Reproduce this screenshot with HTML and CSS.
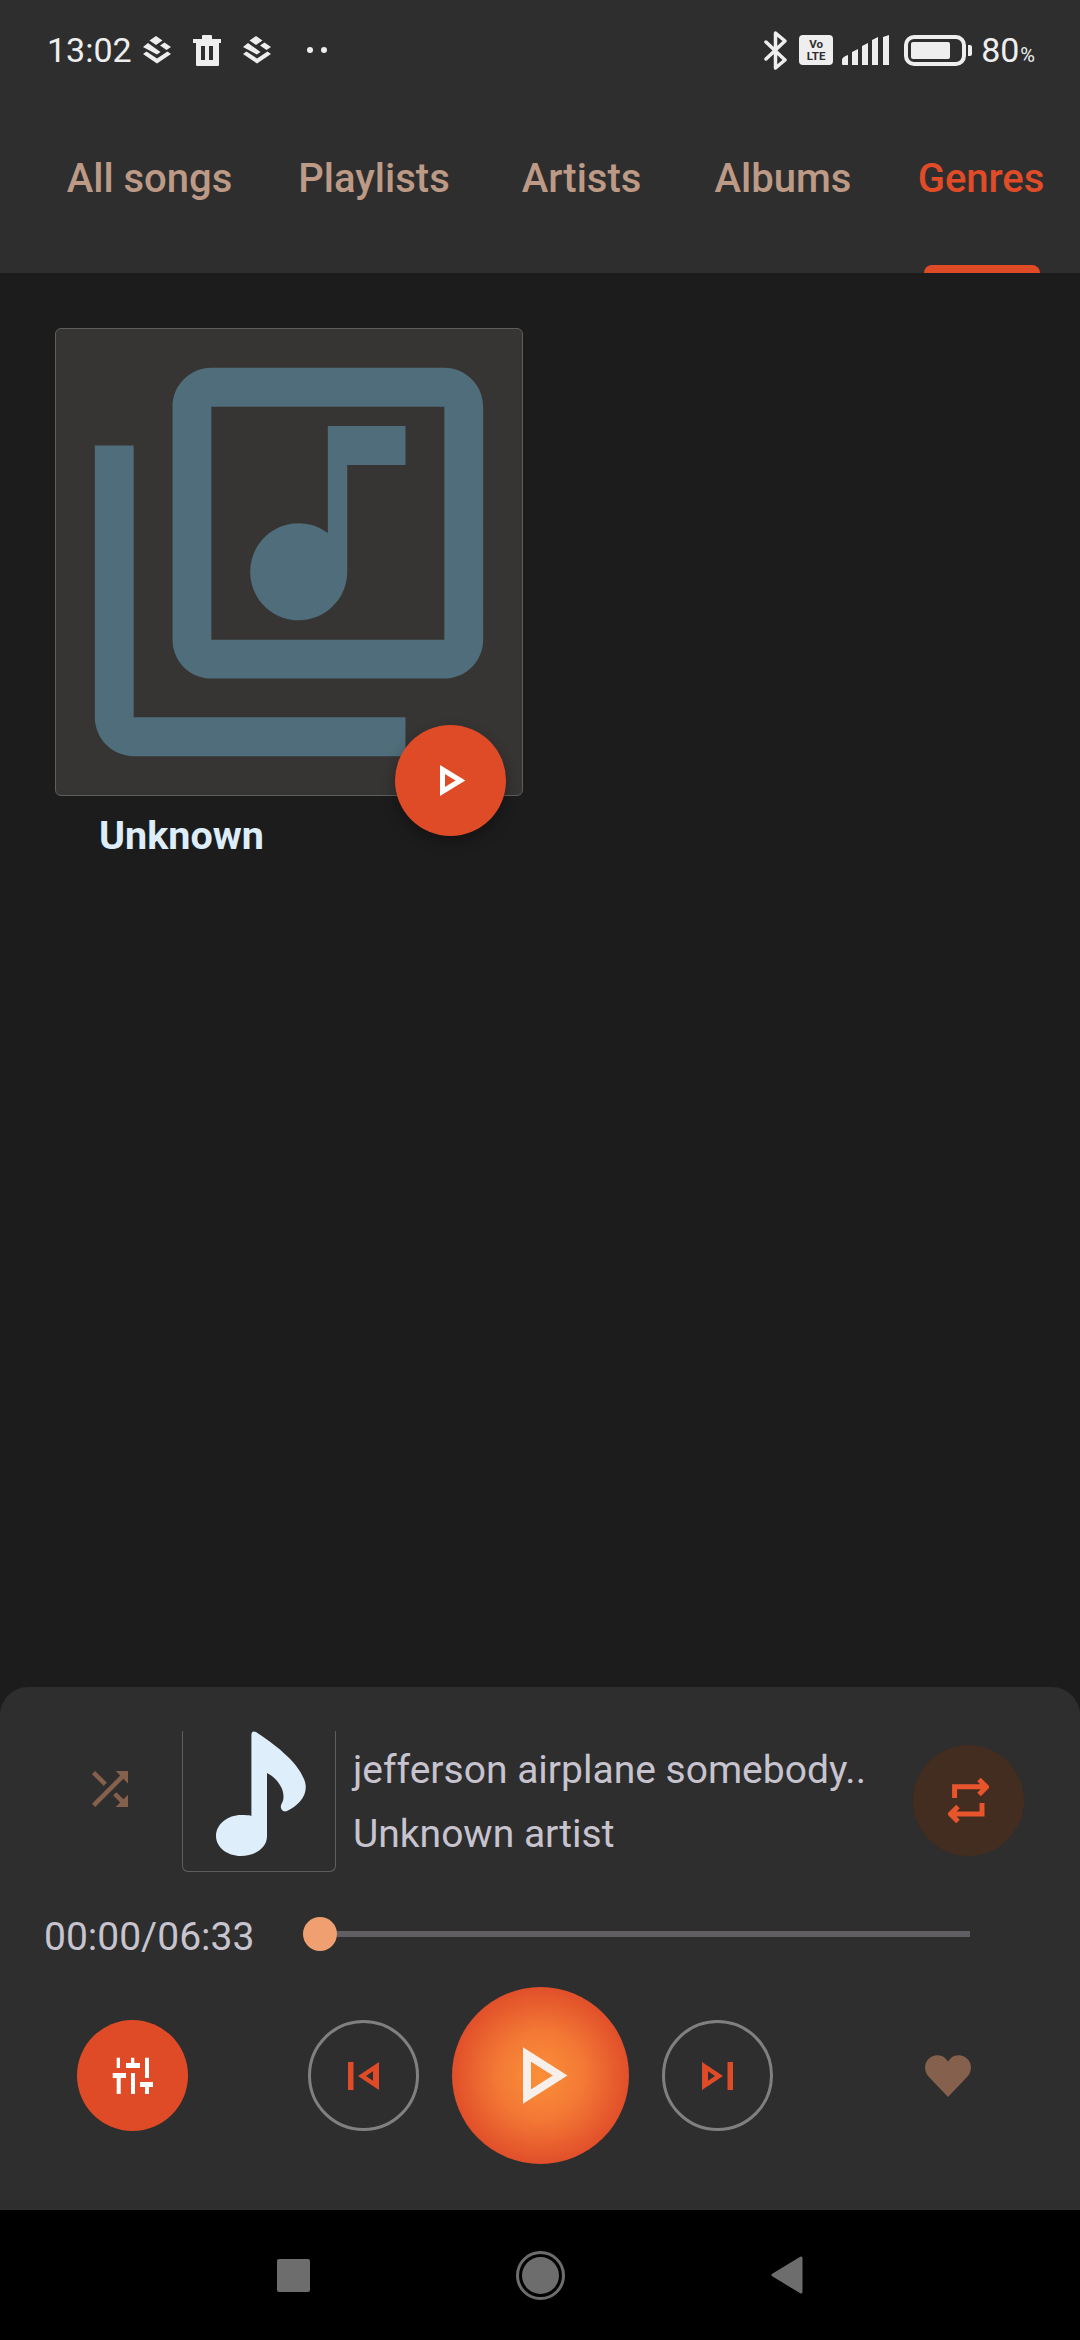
FILE: index.html
```html
<!DOCTYPE html>
<html lang="en">
<head>
    <meta charset="UTF-8">
    <title>Genres</title>
    <link rel="stylesheet" href="styles.css">
</head>
<body>
<div id="container">
    <div class="header">
        <div class="status">
            <div class="status-left">
                <span class="time">13:02</span>
                <svg class="st-layers" width="28" height="28" viewBox="0 0 28 28"><path fill="#eee" d="M13 0l6.500 4.500-6.500 4.500-6.500-4.500zM21.500 6.500l6.500 4.500-4.500 3-6.500-4.500zM5 7l12.500 9-3.500 2.500L0 11zM0 18l3.500-2.500 10.500 7 10.500-7 3.500 2.500-14 9.500z"/></svg>
                <svg class="st-trash" width="28" height="31" viewBox="0 0 28 31"><path fill="#eee" d="M0 4h9V1q0-1 1-1h8q1 0 1 1v3h9v4H26v22q0 1-1 1H4q-1 0-1-1V8H0zM8 11v14h4V11zM16 11v14h4V11z"/></svg>
                <svg class="st-layers2" width="28" height="28" viewBox="0 0 28 28"><path fill="#eee" d="M13 0l6.500 4.500-6.500 4.500-6.500-4.500zM21.500 6.500l6.500 4.500-4.500 3-6.500-4.500zM5 7l12.500 9-3.500 2.500L0 11zM0 18l3.500-2.500 10.500 7 10.500-7 3.500 2.500-14 9.500z"/></svg>
                <span class="dots"><i></i><i></i></span>
            </div>
            <div class="status-right">
                <svg class="st-bt" width="24" height="39" viewBox="0 0 24 39"><path fill="none" stroke="#eee" stroke-width="3.500" stroke-linecap="round" stroke-linejoin="round" d="M2 11l19 18-9.500 8V2L21 10 2 28"/></svg>
                <span class="volte"><span>Vo</span><span>LTE</span></span>
                <svg class="st-signal" width="47" height="30" viewBox="0 0 47 30"><path fill="#eee" d="M0 25q0-3 6-5v10H1q-1 0-1-1zM10 17l6-3v16h-6zM20 11l6-3v22h-6zM30 5l6-3v28h-6zM41 2l6-2v30h-6z"/></svg>
                <span class="battery"><i></i></span>
                <span class="battery-nub"></span>
                <span class="percent">80<small>%</small></span>
            </div>
        </div>
        <ul class="tabs">
            <li>All songs</li>
            <li>Playlists</li>
            <li>Artists</li>
            <li>Albums</li>
            <li class="selected">Genres</li>
        </ul>
    </div>

    <div class="content">
        <div class="genre">
            <div class="cover">
                <svg width="466" height="466" viewBox="0 0 24 24"><path fill="#4f6d7a" d="M20 2H8c-1.100 0-2 .9-2 2v12c0 1.100.9 2 2 2h12c1.100 0 2-.9 2-2V4c0-1.100-.9-2-2-2zm0 14H8V4h12v12zm-7.500-1c1.380 0 2.500-1.120 2.500-2.500V7h3V5h-4v5.510c-.42-.32-.93-.51-1.500-.51-1.380 0-2.500 1.120-2.500 2.500s1.120 2.500 2.500 2.500zM4 6H2v14c0 1.100.9 2 2 2h14v-2H4V6z"/></svg>
                <span class="fab">
                    <svg width="26" height="31" viewBox="0 0 26 31"><path fill="none" stroke="#fff" stroke-width="5" d="M2.500 4.500v22l18-11z"/></svg>
                </span>
            </div>
            <div class="genre-name">Unknown</div>
        </div>
    </div>

    <div class="player">
        <div class="now">
            <svg class="shuffle" width="54" height="54" viewBox="0 0 24 24"><path fill="#85604c" d="M10.590 9.170L5.410 4 4 5.410l5.170 5.170 1.420-1.410zM14.500 4l2.040 2.040L4 18.590 5.410 20 17.960 7.460 20 9.500V4h-5.500zm.33 9.410l-1.410 1.410 3.130 3.130L14.500 20H20v-5.500l-2.040 2.040-3.130-3.130z"/></svg>
            <div class="thumb">
                <svg width="152" height="140" viewBox="0 0 152 140"><path fill="#deeefa" d="M68.400 4Q68.400-1 73 1C90 12 114 30 121 48 127 62 117 74 104 80 99 82 96 76 99 72 104 62 96 48 84 42V105C84 117 72 125 58 125 44 125 33 116 33 105 33 93 45 84 58 84 68.400 84 68.400 85 68.400 85z"/></svg>
            </div>
            <div class="track">
                <div class="title">jefferson airplane somebody..</div>
                <div class="artist">Unknown artist</div>
            </div>
            <span class="repeat">
                <svg width="41" height="45" viewBox="0 0 41 45"><path fill="none" stroke="#e8552c" stroke-width="5" d="M6.600 20V8.700H38M31 1.500l7.500 7.500-7.500 7.500M34 25v11H3M10 28.500L2.500 36l7.500 7.500"/></svg>
            </span>
        </div>
        <div class="progress">
            <span class="elapsed">00:00/06:33</span>
            <div class="seek"><span class="seek-thumb"></span><span class="seek-bar"></span></div>
        </div>
        <div class="controls">
            <span class="eq">
                <svg width="41" height="37" viewBox="0 0 41 37"><path fill="#fff" d="M4.700 .7H8V11H4.700zM.7 16H14v5H8.700v16h-4V21h-4zM19 .7h3.300V6H28v5H14V6h5zM19 16h4v21h-4zM33 .7h4V21h-4zM28 25h13v5h-4v7h-4v-7h-5z"/></svg>
            </span>
            <span class="skip skip-prev">
                <svg width="31" height="28" viewBox="0 0 31 28"><path fill="#e04b27" d="M0 0h5.500v28H0zM10 14L31 0v28zM18 14l7 4.700V9.300z" fill-rule="evenodd"/></svg>
            </span>
            <span class="play">
                <svg width="45" height="57" viewBox="0 0 45 57"><path fill="none" stroke="#f7efe9" stroke-width="8" d="M4 7.500v42l33-21z"/></svg>
            </span>
            <span class="skip skip-next">
                <svg width="31" height="28" viewBox="0 0 31 28"><path fill="#e04b27" fill-rule="evenodd" d="M31 0h-5.500v28H31zM21 14L0 0v28zM13 14l-7 4.700V9.300z"/></svg>
            </span>
            <svg class="heart" width="46" height="42" viewBox="0 0 46 42"><path fill="#85604c" d="M23 42L3.500 21.500C-1 16.500-1 9 3 4.500 8-1 16-1 20.500 3.500L23 6.500 25.500 3.500C30-1 38-1 43 4.500 47 9 47 16.500 42.500 21.500z"/></svg>
        </div>
    </div>

    <div class="nav">
        <span class="nav-square"></span>
        <span class="nav-home"><i></i></span>
        <svg width="32" height="38" viewBox="0 0 32 38"><path fill="#6d6d6d" stroke="#6d6d6d" stroke-width="3" stroke-linejoin="round" d="M2 19L30 2v34z"/></svg>
    </div>
</div>
</body>
</html>
```

FILE: styles.css
```css
*{
    margin:0;
    padding:0;
    box-sizing:border-box;
}
ul{
    list-style:none;
}
body{
    background:#000;
    font-family:Roboto, "Noto Sans", sans-serif;
}
svg{
    display:block;
    flex:none;
}
#container{
    width:1080px;
    height:2340px;
    display:flex;
    flex-direction:column;
    background:#1c1c1c;
}

/* header */
.header{
    height:273px;
    flex:none;
    background:#2e2e2e;
    display:flex;
    flex-direction:column;
}
.status{
    height:100px;
    padding:0 45px 0 47px;
    display:flex;
    justify-content:space-between;
    align-items:center;
    color:#eee;
}
.status-left,
.status-right{
    display:flex;
    align-items:center;
}
.time{
    font-size:34px;
    width:96px;
}
.st-trash{
    margin-left:22px;
}
.st-layers2{
    margin-left:22px;
}
.dots{
    margin-left:36px;
    display:flex;
    gap:8px;
}
.dots i{
    width:6px;
    height:6px;
    border-radius:50%;
    background:#eee;
}
.st-bt{
    margin-right:11px;
}
.volte{
    width:34px;
    height:30px;
    background:#eee;
    border-radius:4px;
    color:#2e2e2e;
    font-size:11.5px;
    line-height:12px;
    font-weight:700;
    display:flex;
    flex-direction:column;
    align-items:center;
    justify-content:center;
}
.st-signal{
    margin-left:9px;
}
.battery{
    margin-left:15px;
    width:62px;
    height:31px;
    border:4px solid #eee;
    border-radius:10px;
    padding:3px;
    display:flex;
}
.battery i{
    width:39px;
    background:#eee;
    border-radius:2px;
}
.battery-nub{
    margin-left:2px;
    width:4px;
    height:11px;
    background:#eee;
    border-radius:0 2px 2px 0;
}
.percent{
    margin-left:9px;
    font-size:34px;
}
.percent small{
    font-size:20px;
    margin-left:1px;
}
.tabs{
    flex:1;
    padding-left:36px;
    display:grid;
    grid-template-columns:227px 222px 193px 210px 186px;
}
.tabs li{
    position:relative;
    text-align:center;
    font-size:40px;
    font-weight:500;
    line-height:66px;
    padding-top:46px;
    color:#bd9a86;
}
.tabs li.selected{
    color:#e04c28;
}
.tabs li.selected::after{
    content:"";
    position:absolute;
    left:36px;
    bottom:0;
    width:116px;
    height:8px;
    background:#e04b27;
    border-radius:8px 8px 0 0;
}

/* genre grid */
.content{
    flex:1;
    padding:55px 0 0 55px;
}
.genre{
    width:468px;
}
.cover{
    position:relative;
    width:468px;
    height:468px;
    background:#373533;
    border:1px solid #5e5e5c;
    border-radius:6px;
}
.fab{
    position:absolute;
    left:339px;
    top:396px;
    width:111px;
    height:111px;
    border-radius:50%;
    background:#e04b27;
    box-shadow:0 6px 14px rgba(0,0,0,.3);
    display:flex;
    align-items:center;
    justify-content:center;
}
.fab svg{
    margin-left:5px;
}
.genre-name{
    margin-top:16px;
    padding-left:44px;
    font-size:39.5px;
    line-height:48px;
    font-weight:700;
    color:#ddeefa;
}

/* player */
.player{
    height:523px;
    flex:none;
    background:#2e2e2e;
    border-radius:28px 28px 0 0;
    display:flex;
    flex-direction:column;
}
.now{
    height:185px;
    padding:44px 55px 0 83px;
    display:flex;
    align-items:flex-start;
}
.shuffle{
    margin-top:31px;
}
.thumb{
    margin-left:45px;
    width:154px;
    height:141px;
    border:1px solid #5e5e5c;
    border-top:0;
    border-radius:0 0 6px 6px;
}
.track{
    margin-left:17px;
    padding-top:7px;
    width:560px;
    font-size:39px;
    line-height:64px;
    color:#c8c4cf;
}
.repeat{
    margin-top:14px;
    width:111px;
    height:111px;
    border-radius:50%;
    background:#432c20;
    display:flex;
    align-items:center;
    justify-content:center;
}
.progress{
    height:48px;
    margin-top:38px;
    padding-left:44px;
    display:flex;
    align-items:center;
}
.elapsed{
    width:259px;
    font-size:39px;
    line-height:48px;
    padding-top:6px;
    color:#c8c4cf;
}
.seek{
    display:flex;
    align-items:center;
}
.seek-thumb{
    width:34px;
    height:34px;
    border-radius:50%;
    background:#f0a070;
}
.seek-bar{
    width:633px;
    height:6px;
    background:#605e63;
}
.controls{
    margin-top:29px;
    padding-left:77px;
    height:177px;
    display:flex;
    align-items:center;
}
.eq,
.skip,
.play{
    border-radius:50%;
    display:flex;
    align-items:center;
    justify-content:center;
}
.eq{
    width:111px;
    height:111px;
    background:#e04b27;
}
.skip{
    width:111px;
    height:111px;
    border:3px solid #808080;
}
.skip-prev{
    margin-left:120px;
}
.play{
    margin:0 33px;
    width:177px;
    height:177px;
    background:radial-gradient(circle closest-side, #fb9038 0%, #f37835 50%, #e14f2a 100%);
}
.play svg{
    margin-left:10px;
}
.heart{
    margin-left:152px;
}

/* bottom nav */
.nav{
    height:130px;
    flex:none;
    background:#000;
    display:flex;
    align-items:center;
    justify-content:center;
    gap:206px;
}
.nav-square{
    width:33px;
    height:33px;
    background:#6d6d6d;
    border-radius:2px;
}
.nav-home{
    width:49px;
    height:49px;
    border:3px solid #6d6d6d;
    border-radius:50%;
    padding:3px;
    display:flex;
}
.nav-home i{
    flex:1;
    background:#6d6d6d;
    border-radius:50%;
}
```
